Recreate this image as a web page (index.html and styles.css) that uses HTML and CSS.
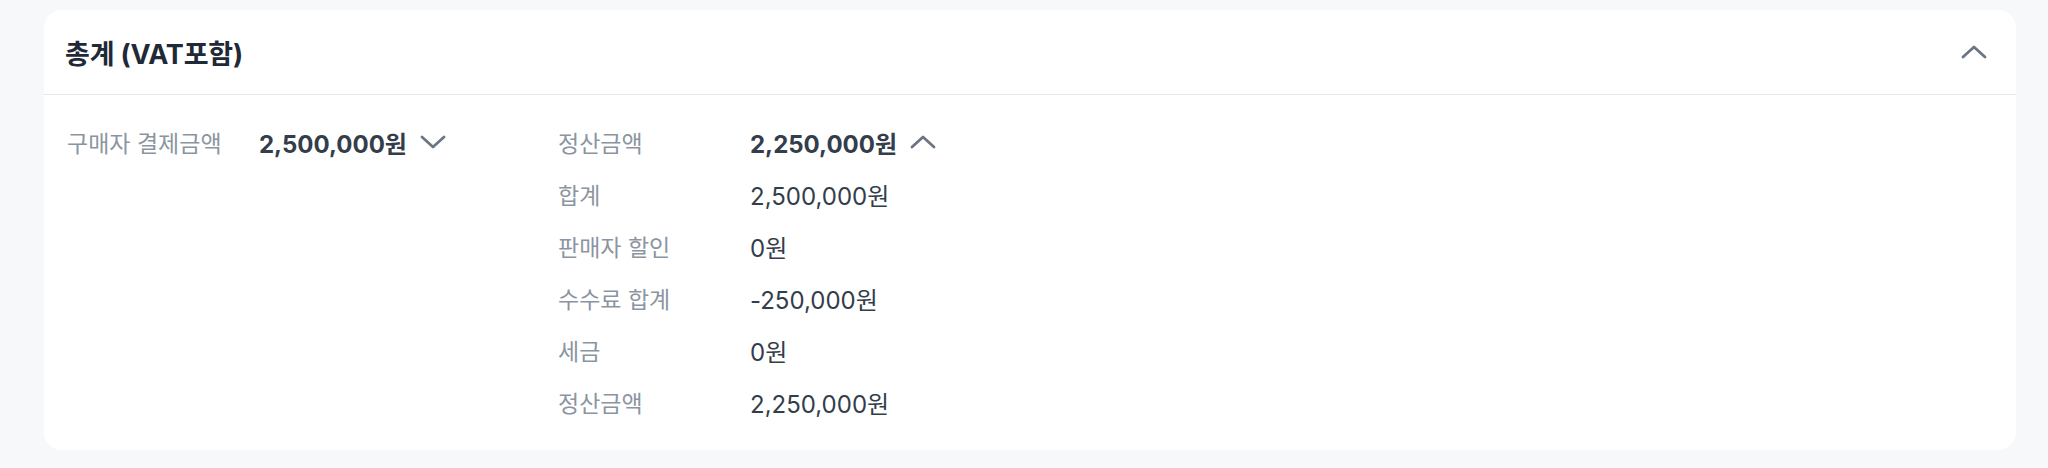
FILE: index.html
```html
<!DOCTYPE html>
<html lang="ko">
<head>
<meta charset="utf-8">
<link rel="stylesheet" href="styles.css">
</head>
<body>
<section class="card">
  <header class="card-header">
    <h2 class="title">총계 (VAT포함)</h2>
    <button class="icon-btn" aria-label="접기">
      <svg class="chev" viewBox="0 0 26 14" width="26" height="14"><polyline points="2,12 13,2 24,12"/></svg>
    </button>
  </header>
  <div class="card-body">
    <div class="col col-buyer">
      <div class="row">
        <span class="label">구매자 결제금액</span>
        <span class="value strong">2,500,000원</span>
        <svg class="chev small" viewBox="0 0 26 14" width="26" height="14"><polyline points="2,2 13,12 24,2"/></svg>
      </div>
    </div>
    <div class="col col-settle">
      <div class="row">
        <span class="label">정산금액</span>
        <span class="value strong">2,250,000원</span>
        <svg class="chev small" viewBox="0 0 26 14" width="26" height="14"><polyline points="2,12 13,2 24,12"/></svg>
      </div>
      <div class="row">
        <span class="label">합계</span>
        <span class="value">2,500,000원</span>
      </div>
      <div class="row">
        <span class="label">판매자 할인</span>
        <span class="value">0원</span>
      </div>
      <div class="row">
        <span class="label">수수료 합계</span>
        <span class="value">-250,000원</span>
      </div>
      <div class="row">
        <span class="label">세금</span>
        <span class="value">0원</span>
      </div>
      <div class="row">
        <span class="label">정산금액</span>
        <span class="value">2,250,000원</span>
      </div>
    </div>
  </div>
</section>
</body>
</html>
```

FILE: styles.css
```css
* { box-sizing: border-box; }
html, body { margin: 0; padding: 0; }
body {
  background: #f7f8fa;
  font-family: Inter, "Noto Sans CJK KR", sans-serif;
  padding: 10px 32px 18px 44px;
}
.card {
  background: #ffffff;
  border-radius: 18px;
  overflow: hidden;
  height: 440px;
}
.card-header {
  height: 85px;
  display: flex;
  align-items: center;
  justify-content: space-between;
  padding: 0 26px 0 21px;
  border-bottom: 1px solid #e5e8eb;
}
.title {
  margin: 0;
  font-size: 27px;
  font-weight: 700;
  color: #1f2937;
  letter-spacing: -0.2px;
}
.icon-btn {
  border: 0;
  background: none;
  padding: 0;
  width: 32px;
  height: 32px;
  display: flex;
  align-items: center;
  justify-content: center;
}
.chev polyline {
  fill: none;
  stroke: #6b7684;
  stroke-width: 2.8;
  stroke-linecap: round;
  stroke-linejoin: round;
}
.chev { width: 26px; height: 14px; }
.chev.small { margin-left: 13px; }
.card-body {
  display: flex;
  padding: 31px 23px 0 23px;
}
.col {
  display: flex;
  flex-direction: column;
  gap: 20px;
}
.col-buyer { width: 491px; }
.row {
  display: flex;
  align-items: center;
  height: 32px;
}
.label {
  width: 192px;
  font-size: 23px;
  color: #8b95a1;
}
.value {
  font-size: 24px;
  color: #333d4b;
}
.value.strong { font-weight: 700; }
```
